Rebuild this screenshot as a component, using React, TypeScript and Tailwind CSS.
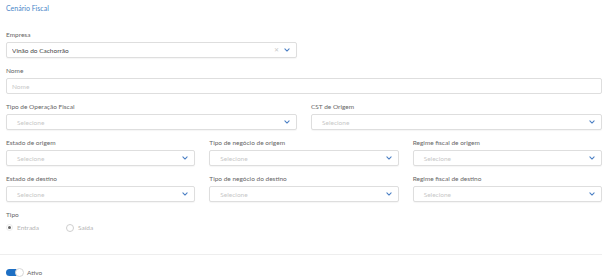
const Chevron = () => (
  <svg width="6" height="4" viewBox="0 0 10 6" className="shrink-0">
    <path d="M1.5 1.2l3.5 3.5 3.5-3.5" fill="none" stroke="#4b7fc4" strokeWidth="1.8" strokeLinecap="round" strokeLinejoin="round" />
  </svg>
);

const Select = ({ value, clear }: { value?: string; clear?: boolean }) => (
  <div className="flex h-[16px] items-center rounded-[2px] border border-[#dedede] bg-white pl-[5px] pr-[6px] shadow-[0_1px_1px_rgba(0,0,0,0.04)]">
    <span className={`flex-1 truncate ${value ? "text-[#444]" : "pl-[5px] text-[#c8c8c8]"}`}>{value ?? "Selecione"}</span>
    {clear && <span className="mr-[5px] text-[6px] leading-none text-[#c8c8c8]">✕</span>}
    <Chevron />
  </div>
);

const Field = ({ label, children }: { label: string; children: React.ReactNode }) => (
  <div className="flex flex-col gap-[3px]">
    <span className="text-[#666]">{label}</span>
    {children}
  </div>
);

const App = () => {
  return (
    <div className="h-[279px] w-[612px] overflow-hidden bg-white pl-[6px] pr-[10px] pt-[4px] font-['Lato',sans-serif] text-[6.5px] leading-[9px]">
      <h1 className="text-[7px] text-[#4a86c8]">Cenário Fiscal</h1>

      <div className="mt-[17px] flex flex-col gap-[8px]">
        <div className="w-[291px]">
          <Field label="Empresa">
            <Select value="Vinão do Cachorrão" clear />
          </Field>
        </div>

        <Field label="Nome">
          <div className="flex h-[16px] items-center rounded-[2px] border border-[#dedede] px-[5px] text-[#c8c8c8]">Nome</div>
        </Field>

        <div className="grid grid-cols-2 gap-x-[14px]">
          <Field label="Tipo de Operação Fiscal">
            <Select />
          </Field>
          <Field label="CST de Origem">
            <Select />
          </Field>
        </div>

        <div className="grid grid-cols-3 gap-x-[14px]">
          <Field label="Estado de origem">
            <Select />
          </Field>
          <Field label="Tipo de negócio de origem">
            <Select />
          </Field>
          <Field label="Regime fiscal de origem">
            <Select />
          </Field>
        </div>

        <div className="grid grid-cols-3 gap-x-[14px]">
          <Field label="Estado de destino">
            <Select />
          </Field>
          <Field label="Tipo de negócio do destino">
            <Select />
          </Field>
          <Field label="Regime fiscal de destino">
            <Select />
          </Field>
        </div>

        <div className="flex flex-col gap-[4px]">
          <span className="text-[#666]">Tipo</span>
          <div className="flex items-center gap-[27px] text-[#b5b5b5]">
            <label className="flex items-center gap-[4px]">
              <span className="flex h-[7px] w-[7px] items-center justify-center rounded-full border border-[#ececec]">
                <span className="h-[3px] w-[3px] rounded-full bg-[#666]" />
              </span>
              Entrada
            </label>
            <label className="flex items-center gap-[4px]">
              <span className="h-[8px] w-[8px] rounded-full border border-[#cfcfcf]" />
              Saída
            </label>
          </div>
        </div>
      </div>

      <div className="ml-[-6px] mt-[22px] border-t border-[#eeeeee]" />

      <div className="mt-[13px] flex items-center gap-[4px] text-[#666]">
        <span className="relative flex h-[7px] w-[17px] items-center rounded-full bg-[#1d6fc4]">
          <span className="absolute right-[-1px] h-[9px] w-[9px] rounded-full border border-[#d8d8d8] bg-white" />
        </span>
        Ativo
      </div>
    </div>
  );
};

export default App;
